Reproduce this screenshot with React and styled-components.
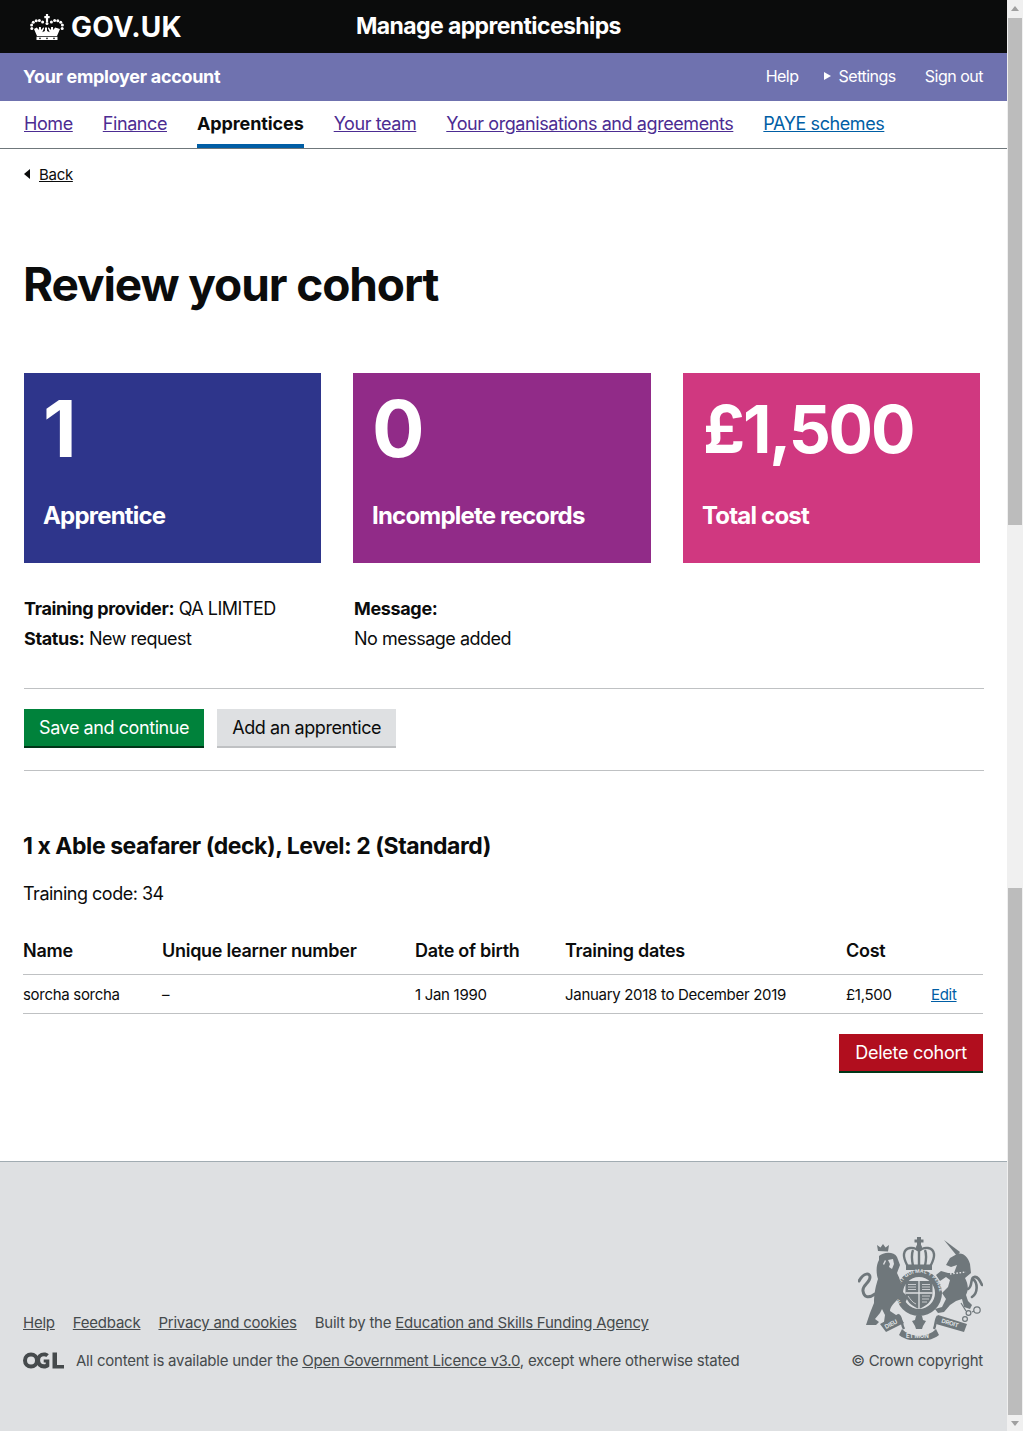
import React from 'react'
import styled, {createGlobalStyle} from 'styled-components'

const Global = createGlobalStyle`
html, body {
  margin: 0;
  padding: 0;
  height: 1431px;
  overflow: hidden;
  background: #fff;
}
body {
  font-family: Inter, "Liberation Sans", sans-serif;
  color: #0b0c0c;
  -webkit-font-smoothing: antialiased;
}
* { box-sizing: border-box; }
`

const Shell = styled.div`
display: grid;
grid-template-columns: 1007px 16px;
height: 1431px;
`
const Page = styled.div`
display: flex;
flex-direction: column;
height: 1431px;
`
const Scrollbar = styled.div`
background: #f0f0f0;
display: flex;
flex-direction: column;
align-items: center;
padding-top: 18px;
position: relative;
`
const ScrollThumb = styled.div`
width: 14px;
height: ${props => props.size}px;
margin-top: ${props => props.gap}px;
background: #bcbcbc;
`
const ScrollArrow = styled.div`
position: absolute;
left: 4px;
width: 0;
height: 0;
border-left: 4px solid transparent;
border-right: 4px solid transparent;
${props => props.down
  ? 'bottom: 5px; border-top: 5px solid #a0a0a0;'
  : 'top: 6px; border-bottom: 5px solid #a0a0a0;'}
`

const TopBar = styled.header`
background: #0b0c0c;
height: 53px;
display: flex;
align-items: center;
color: #fff;
padding-left: 30px;
`
const Logo = styled.div`
display: flex;
align-items: center;
gap: 7px;
width: 326px;
font-weight: 700;
font-size: 28px;
letter-spacing: 0.2px;
`
const ServiceName = styled.div`
font-weight: 700;
font-size: 23px;
letter-spacing: -0.6px;
margin-bottom: 2px;
`
const AccountBar = styled.div`
background: #6f72af;
height: 48px;
display: flex;
align-items: center;
justify-content: space-between;
padding: 0 24px 2px;
color: #fff;
`
const AccountTitle = styled.div`
font-weight: 700;
font-size: 18px;
letter-spacing: -0.3px;
margin-left: -1px;
`
const AccountLinks = styled.div`
display: flex;
align-items: center;
gap: 29px;
font-size: 16px;
letter-spacing: -0.5px;
`
const SettingsLink = styled.span`
display: flex;
align-items: center;
gap: 8px;
margin-left: -4px;
&::before {
  content: '';
  border-left: 7px solid #fff;
  border-top: 4px solid transparent;
  border-bottom: 4px solid transparent;
}
`
const Nav = styled.nav`
height: 48px;
display: flex;
gap: 30px;
padding: 0 24px;
border-bottom: 1px solid #6f777b;
font-size: 18px;
letter-spacing: -0.42px;
`
const NavItem = styled.a`
display: block;
height: 47px;
padding-top: 12px;
color: ${props => props.active ? '#0b0c0c' : props.fresh ? '#005ea5' : '#4c2c92'};
font-weight: ${props => props.active ? 700 : 400};
letter-spacing: ${props => props.active ? '-0.1px' : 'inherit'};
text-decoration: ${props => props.active ? 'none' : 'underline'};
border-bottom: ${props => props.active ? '4px solid #005ea5' : 'none'};
`
const Main = styled.main`
padding: 0 23px 0 24px;
flex: 1;
`
const BackLink = styled.a`
display: flex;
align-items: center;
gap: 9px;
margin-top: 16px;
height: 18px;
font-size: 15px;
letter-spacing: -0.3px;
color: #0b0c0c;
text-decoration: underline;
&::before {
  content: '';
  border-right: 6px solid #0b0c0c;
  border-top: 5px solid transparent;
  border-bottom: 5px solid transparent;
}
`
const Title = styled.h1`
margin: 71px 0 0 -1px;
height: 60px;
font-size: 46px;
line-height: 60px;
font-weight: 700;
letter-spacing: -1.1px;
`
const Cards = styled.div`
margin-top: 59px;
display: grid;
grid-template-columns: 297px 298px 297px;
column-gap: 32px;
`
const Card = styled.div`
background: ${props => props.color};
height: 190px;
padding: 18px 20px;
color: #fff;
`
const CardValue = styled.div`
font-size: ${props => props.small ? 66 : 78}px;
line-height: 76px;
font-weight: 700;
letter-spacing: ${props => props.small ? -2.2 : -1}px;
margin-left: ${props => props.small ? 0 : -1}px;
`
const CardLabel = styled.div`
margin: 34px 0 0 -1px;
font-size: 24px;
line-height: 30px;
font-weight: 700;
letter-spacing: -0.8px;
`
const Meta = styled.div`
margin-top: 31px;
display: grid;
grid-template-columns: 330px 1fr;
font-size: 18px;
line-height: 30px;
letter-spacing: -0.5px;
`
const MetaLine = styled.div`
white-space: nowrap;
`
const MetaKey = styled.b`
letter-spacing: -0.35px;
`
const Actions = styled.div`
margin-top: 34px;
width: 960px;
height: 83px;
border-top: 1px solid #bfc1c3;
border-bottom: 1px solid #bfc1c3;
padding-top: 20px;
display: flex;
gap: 13px;
align-items: flex-start;
`
const Button = styled.a`
display: block;
height: 39px;
padding: 0 ${props => props.pad || 15}px;
font-size: 18px;
line-height: 37px;
letter-spacing: ${props => props.spacing || '-0.42px'};
color: ${props => props.light ? '#0b0c0c' : '#fff'};
background: ${props => props.color};
border-bottom: 2px solid ${props => props.edge};
`
const CohortSection = styled.section`
margin-left: -1px;
width: 960px;
`
const Heading = styled.h2`
margin: 58px 0 0;
font-size: 23px;
line-height: 34px;
font-weight: 700;
letter-spacing: -0.45px;
`
const TrainingCode = styled.p`
margin: 18px 0 0;
font-size: 18px;
line-height: 26px;
letter-spacing: -0.5px;
`
const Table = styled.table`
margin-top: 33px;
width: 960px;
border-collapse: collapse;
table-layout: fixed;
`
const Th = styled.th`
height: 34px;
padding: 0 0 12px;
text-align: left;
font-size: 18px;
font-weight: 600;
letter-spacing: -0.27px;
border-bottom: 1px solid #bfc1c3;
`
const Td = styled.td`
height: 39px;
padding: 1px 0 0;
font-size: 15px;
letter-spacing: -0.3px;
border-bottom: 1px solid #bfc1c3;
`
const EditLink = styled.a`
color: #005ea5;
text-decoration: underline;
`
const DeleteRow = styled.div`
margin-top: 20px;
display: flex;
justify-content: flex-end;
`
const Footer = styled.footer`
height: 270px;
background: #dee0e2;
border-top: 1px solid #a1acb2;
padding: 0 24px 61px 23px;
display: flex;
justify-content: space-between;
align-items: flex-end;
color: #454a4c;
font-size: 15px;
letter-spacing: -0.23px;
`
const FooterMain = styled.div`
display: flex;
flex-direction: column;
gap: 18px;
`
const FooterLinks = styled.div`
display: flex;
gap: 18px;
`
const FooterLink = styled.a`
color: #454a4c;
text-decoration: underline;
`
const Licence = styled.div`
display: flex;
align-items: center;
gap: 12px;
height: 20px;
`
const Copyright = styled.div`
display: flex;
flex-direction: column;
align-items: flex-end;
gap: 11px;
`

const Crown = () => (
  <svg width="34" height="26" viewBox="0 0 34 26" fill="#fff">
    <rect x="15.900" y="0" width="2.200" height="8" />
    <rect x="14.300" y="2" width="5.400" height="2.200" />
    {[[1.800, 14.500], [1.600, 11], [3.300, 8.300], [6.200, 6.700], [9.400, 6.500], [12.600, 8], [17, 9.400], [21.400, 8], [24.600, 6.500], [27.800, 6.700], [30.700, 8.300], [32.400, 11], [32.200, 14.500]].map(([cx, cy]) => (
      <circle key={cx} cx={cx} cy={cy} r="1.500" />
    ))}
    <path d="M4 15l2.800-1.400 2 2.500.2-3h1.900l.2 3 2.400-2.800.6 1-1.800 4 2.600-1.200.1-3.600h2l.1 3.600 2.600 1.200-1.800-4 .6-1 2.400 2.800.2-3h1.900l.2 3 2-2.500L30 15l-3 7H7z" />
    <path fillRule="evenodd" d="M6.500 22.800h21V26h-21zM10 23.600a.8.800 0 1 0 0 1.600.8.800 0 0 0 0-1.600zm7 0a.8.800 0 1 0 0 1.600.8.800 0 0 0 0-1.600zm7 0a.8.800 0 1 0 0 1.600.8.800 0 0 0 0-1.600z" />
  </svg>
)

const Ogl = () => (
  <svg width="41" height="17" viewBox="0 0 41 17" fill="#454a4c">
    <path fillRule="evenodd" d="M8 .5a8 8 0 1 1 0 16 8 8 0 0 1 0-16zm0 4a4 4 0 1 0 0 8 4 4 0 0 0 0-8z" />
    <path d="M21 .5c2 0 3.600.6 4.800 1.700l-2.500 2.800c-.6-.5-1.400-.8-2.300-.8a4 4 0 1 0 .2 8c.6 0 1-.1 1.500-.3v-1.500h-2V7.600h5.600v6.800c-1.500 1.300-3.300 2.100-5.300 2.100a8 8 0 1 1 0-16z" />
    <path d="M29.500.5H34v12.400h7v3.600H29.500z" />
  </svg>
)

const CREST_BG = '#dee0e2'

const Crest = () => (
  <svg width="125" height="103" viewBox="0 0 125 103" fill="#6f777b">
    {/* royal crown */}
    <rect x="59" y="0" width="4" height="12" />
    <rect x="56.500" y="2.500" width="9" height="3" />
    <circle cx="61" cy="10.500" r="3" />
    <path fill="none" stroke="#6f777b" strokeWidth="2.400" d="M61 14C56 9 47 10 46 17c-.6 4 1.500 8 3.500 12M61 14c5-5 14-4 15 3 .6 4-1.500 8-3.500 12M61 14v15M55 13c-2 5-1 11 0 16M67 13c2 5 1 11 0 16" />
    <rect x="48" y="27.500" width="26" height="5.500" />

    {/* garter and shield */}
    <path fillRule="evenodd" d="M61 33a23 23 0 1 1 0 46 23 23 0 0 1 0-46zm0 7a16 16 0 1 0 0 32 16 16 0 0 0 0-32z" />
    <path d="M47.500 44h27v12c0 8-6 13-13.500 16-7.500-3-13.500-8-13.500-16z" />
    <path fill="none" stroke={CREST_BG} strokeWidth="1.300" d="M61 44v28M47.500 56h27" />
    <path fill="none" stroke={CREST_BG} strokeWidth=".8" d="M50 47.500h8M50 50h8M50 52.500h8M64 47.500h8M64 50h8M64 52.500h8M50 59c2 3 5 7 8 8M64 59h8M64 62h7M64 65h5" />
    <defs>
      <path id="garter-arc" d="M43 66a20.500 20.500 0 1 1 36 0" />
    </defs>
    <text fill={CREST_BG} fontSize="4.800" fontWeight="700" letterSpacing=".2" fontFamily="Inter, sans-serif">
      <textPath href="#garter-arc">HONI SOIT QUI MAL Y PENSE</textPath>
    </text>

    {/* lion */}
    <path d="M20 14l-1-6 3.500 2.500L25 7l2.500 3.500L31 8l-1 6.500z" />
    <path d="M21 19c4-4 15-5 18 1l3 8-3 8c3 6 5 12 5 18l6 6-3 6-7-4c-4 4-8 8-8 12l6 4 4 2-8 6-8-1 1-7-3-6-2 4-5 6 4 3-3 3H8l4-12 4-10c0-10 2-18 4-24-2-6-2-14 1-19z" />
    <path fill={CREST_BG} d="M30 23l5-1 1 5-2 5-3-2 1-3zM27 23l1 1-2 4-1-1z" />
    <path fill="none" stroke="#6f777b" strokeWidth="3" strokeLinecap="round" d="M17 57C10 62 6 60 5 54c-1-6 7-8 7-14 0-4-6-5-11 4" />

    {/* unicorn */}
    <path d="M86 3l16 12-3 4z" />
    <path d="M99 17c6-2 11 3 13 10l1 9-6 5c3 6 4 11 1 17l2 6 4 4-2 4-6-2-2-8-6 2-6 4-6 7-6 1-3-4 7-2 4-8-4-6 6-6 2-7-4-3-6 4-4-6 5-4 7 2 6 0 3-8-6 2-5-2 4-7z" />
    <path fill="none" stroke={CREST_BG} strokeWidth="1.400" strokeDasharray="1.600 1.600" d="M92 37l16-2" />
    <path fill="none" stroke="#6f777b" strokeWidth="2.600" strokeLinecap="round" d="M110 52c5-2 2-12 6-12 4-1 6 4 8 8M115 42c5 4 5 14-1 18" />
    <g fill="none" stroke="#6f777b" strokeWidth="1.200">
      <circle cx="119" cy="73" r="3.200" />
      <circle cx="110.500" cy="76" r="2.400" />
      <circle cx="107" cy="82" r="2.400" />
      <path d="M103 66l5 8M114 75l2-1" />
    </g>

    {/* motto scroll */}
    <path d="M58 79l3-3 3 3 1 4 3 1-3 5-1 3h-6l-1-3-3-5 3-1z" />
    <path d="M22 87l18-10 6 9-18 9zM44 92c8 9 26 9 34 0l3 6c-10 8-30 8-40 0zM80 78l29 9-3 8-28-8z" />
    <path fill="none" stroke="#6f777b" strokeWidth="2.400" d="M40 78c4 1 3 9 6 14M80 79c-3 3-2 9-4 13" />
    <g fill={CREST_BG} fontSize="6" fontWeight="700" fontFamily="Inter, sans-serif">
      <text transform="translate(28 92) rotate(-27)">DIEU</text>
      <text x="48" y="100.500">ET MON</text>
      <text transform="translate(83 85.500) rotate(17)">DROIT</text>
    </g>
  </svg>
)

export default function App(){
  return (
    <Shell>
      <Global />
      <Page>
        <TopBar>
          <Logo><Crown />GOV.UK</Logo>
          <ServiceName>Manage apprenticeships</ServiceName>
        </TopBar>
        <AccountBar>
          <AccountTitle>Your employer account</AccountTitle>
          <AccountLinks>
            <span>Help</span>
            <SettingsLink>Settings</SettingsLink>
            <span>Sign out</span>
          </AccountLinks>
        </AccountBar>
        <Nav>
          <NavItem>Home</NavItem>
          <NavItem>Finance</NavItem>
          <NavItem active>Apprentices</NavItem>
          <NavItem>Your team</NavItem>
          <NavItem>Your organisations and agreements</NavItem>
          <NavItem fresh>PAYE schemes</NavItem>
        </Nav>
        <Main>
          <BackLink>Back</BackLink>
          <Title>Review your cohort</Title>
          <Cards>
            <Card color="#2e358b"><CardValue>1</CardValue><CardLabel>Apprentice</CardLabel></Card>
            <Card color="#912b88"><CardValue>0</CardValue><CardLabel>Incomplete records</CardLabel></Card>
            <Card color="#d03880"><CardValue small>£1,500</CardValue><CardLabel>Total cost</CardLabel></Card>
          </Cards>
          <Meta>
            <div>
              <MetaLine><MetaKey>Training provider:</MetaKey> QA LIMITED</MetaLine>
              <MetaLine><MetaKey>Status:</MetaKey> New request</MetaLine>
            </div>
            <div>
              <MetaLine><MetaKey>Message:</MetaKey></MetaLine>
              <MetaLine>No message added</MetaLine>
            </div>
          </Meta>
          <Actions>
            <Button color="#00823b" edge="#003618">Save and continue</Button>
            <Button light color="#dee0e2" edge="#bfc1c3">Add an apprentice</Button>
          </Actions>
          <CohortSection>
            <Heading>1 x Able seafarer (deck), Level: 2 (Standard)</Heading>
            <TrainingCode>Training code: 34</TrainingCode>
            <Table>
              <colgroup>
                <col width="139" /><col width="253" /><col width="150" /><col width="281" /><col width="85" /><col width="52" />
              </colgroup>
              <thead>
                <tr>
                  <Th>Name</Th><Th>Unique learner number</Th><Th>Date of birth</Th><Th>Training dates</Th><Th>Cost</Th><Th />
                </tr>
              </thead>
              <tbody>
                <tr>
                  <Td>sorcha sorcha</Td><Td>–</Td><Td>1 Jan 1990</Td><Td>January 2018 to December 2019</Td><Td>£1,500</Td><Td><EditLink>Edit</EditLink></Td>
                </tr>
              </tbody>
            </Table>
            <DeleteRow>
              <Button color="#b10e1e" edge="#003618" pad={16} spacing="-0.25px">Delete cohort</Button>
            </DeleteRow>
          </CohortSection>
        </Main>
        <Footer>
          <FooterMain>
            <FooterLinks>
              <FooterLink>Help</FooterLink>
              <FooterLink>Feedback</FooterLink>
              <FooterLink>Privacy and cookies</FooterLink>
              <span>Built by the <FooterLink>Education and Skills Funding Agency</FooterLink></span>
            </FooterLinks>
            <Licence>
              <Ogl />
              <span>All content is available under the <FooterLink>Open Government Licence v3.0</FooterLink>, except where otherwise stated</span>
            </Licence>
          </FooterMain>
          <Copyright>
            <Crest />
            <span>© Crown copyright</span>
          </Copyright>
        </Footer>
      </Page>
      <Scrollbar>
        <ScrollArrow />
        <ScrollThumb size={507} gap={0} />
        <ScrollThumb size={527} gap={363} />
        <ScrollArrow down />
      </Scrollbar>
    </Shell>
  )
}
